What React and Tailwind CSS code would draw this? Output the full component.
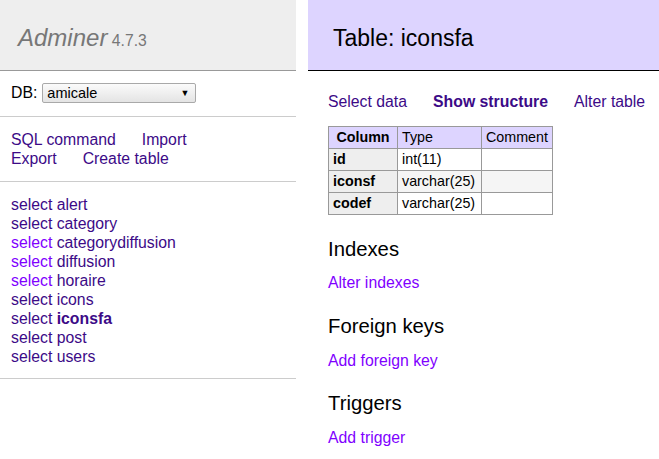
import React from "react";

const dark = "text-[#3c0a87]";
const bright = "text-[#7f00ff]";

const tables = [
  { name: "alert", sel: dark },
  { name: "category", sel: dark },
  { name: "categorydiffusion", sel: bright },
  { name: "diffusion", sel: bright },
  { name: "horaire", sel: bright },
  { name: "icons", sel: dark },
  { name: "iconsfa", sel: dark, active: true },
  { name: "post", sel: dark },
  { name: "users", sel: dark },
];

const columns = [
  { name: "id", type: "int(11)" },
  { name: "iconsf", type: "varchar(25)", odd: true },
  { name: "codef", type: "varchar(25)" },
];

const App = () => {
  return (
    <div className="flex w-[659px] h-[459px] overflow-hidden bg-white text-black font-['Liberation_Sans',Arial,sans-serif]">
      {/* Menu */}
      <div className="w-[296px] flex-shrink-0">
        <div className="h-[71px] bg-[#eeeeee] border-b border-[#999999] pl-[18px] pt-[24px]">
          <span className="italic text-[24px] leading-[28px] text-[#777777]">Adminer</span>{" "}
          <span className="text-[15.7px] text-[#777777]">4.7.3</span>
        </div>

        <div className="h-[46px] border-b border-[#cccccc] pl-[11px] pt-[12px] flex items-start gap-[5px] text-[15.8px]">
          <span className="leading-[20px]">DB:</span>
          <div className="w-[154px] h-[20px] border border-[#a9a9a9] rounded-[2px] bg-gradient-to-b from-[#fbfbfb] to-[#e4e4e4] flex items-center justify-between pl-[4px] pr-[6px]">
            <span className="text-[14.5px] leading-[18px]">amicale</span>
            <span className="text-[9px] leading-none">▼</span>
          </div>
        </div>

        <div className="h-[65px] border-b border-[#cccccc] pl-[11px] pt-[13px] text-[15.8px] leading-[19px]">
          <div className="flex gap-[26px]">
            <span className={dark}>SQL command</span>
            <span className={dark}>Import</span>
          </div>
          <div className="flex gap-[26px]">
            <span className={dark}>Export</span>
            <span className={dark}>Create table</span>
          </div>
        </div>

        <div className="h-[197px] border-b border-[#cccccc] pl-[11px] pt-[13px] text-[15.8px] leading-[19px]">
          {tables.map((t) => (
            <div key={t.name}>
              <span className={t.sel}>select</span>{" "}
              <span className={t.active ? "text-[#3c0a87] font-bold" : dark}>{t.name}</span>
            </div>
          ))}
        </div>
      </div>

      {/* Content */}
      <div className="flex-1 ml-[12px]">
        <div className="h-[71px] bg-[#ddd4ff] border-b border-black pl-[25px] pt-[24px]">
          <h2 className="text-[23px] leading-[28px] font-normal">Table: iconsfa</h2>
        </div>

        <div className="pl-[20px]">
          <div className="mt-[21px] flex gap-[26px] text-[15.8px] leading-[19px]">
            <span className={dark}>Select data</span>
            <span className="text-[#3c0a87] font-bold">Show structure</span>
            <span className={dark}>Alter table</span>
          </div>

          <table className="mt-[15px] border-collapse border border-[#999999] text-[14.3px] leading-[17px]">
            <thead>
              <tr className="bg-[#ddd4ff] h-[22px]">
                <th className="border border-[#999999] w-[69px] px-[5px] font-bold text-center">Column</th>
                <td className="border border-[#999999] w-[84px] px-[4px]">Type</td>
                <td className="border border-[#999999] w-[71px] px-[4px]">Comment</td>
              </tr>
            </thead>
            <tbody>
              {columns.map((c) => (
                <tr key={c.name} className={`h-[22px] ${c.odd ? "bg-[#f5f5f5]" : "bg-white"}`}>
                  <th className="border border-[#999999] bg-[#eeeeee] px-[4px] font-bold text-left">{c.name}</th>
                  <td className="border border-[#999999] px-[4px]">{c.type}</td>
                  <td className="border border-[#999999] px-[4px]"></td>
                </tr>
              ))}
            </tbody>
          </table>

          <h3 className="mt-[22px] text-[20.3px] leading-[24px] font-normal">Indexes</h3>
          <div className={`mt-[12px] text-[15.8px] leading-[19px] ${bright}`}>Alter indexes</div>

          <h3 className="mt-[22px] text-[20.3px] leading-[24px] font-normal">Foreign keys</h3>
          <div className={`mt-[13px] text-[15.8px] leading-[19px] ${bright}`}>Add foreign key</div>

          <h3 className="mt-[21px] text-[20.3px] leading-[24px] font-normal">Triggers</h3>
          <div className={`mt-[13px] text-[15.8px] leading-[19px] ${bright}`}>Add trigger</div>
        </div>
      </div>
    </div>
  );
};

export default App;
